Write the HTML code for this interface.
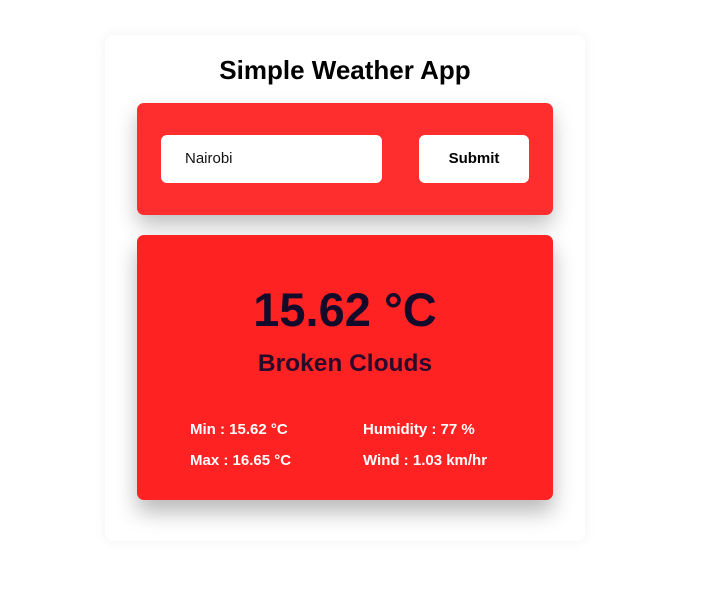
<!DOCTYPE html>
<html><head><style>
body{margin:0;width:708px;height:602px;background:#fff;font-family:"Liberation Sans",sans-serif;position:relative;overflow:hidden}
.card{position:absolute;left:105px;top:35px;width:480px;height:506px;background:#fff;border-radius:8px;box-shadow:0 0 12px rgba(0,0,0,.06)}
h1{position:absolute;left:105px;width:480px;top:55px;margin:0;text-align:center;font-size:26px;font-weight:bold;color:#000}
.form{position:absolute;left:137px;top:103px;width:416px;height:112px;background:#ff2e2e;border-radius:7px;box-shadow:0 10px 20px rgba(0,0,0,.25)}
.inp{position:absolute;left:24px;top:32px;width:221px;height:48px;background:#fff;border-radius:6px;font-size:15px;line-height:48px;text-indent:24px;color:#111}
.btn{position:absolute;left:282px;top:32px;width:110px;height:48px;background:#fff;border-radius:6px;font-size:15px;line-height:48px;text-align:center;font-weight:bold;color:#000}
.w{position:absolute;left:137px;top:235px;width:416px;height:265px;background:#ff2222;border-radius:7px;box-shadow:0 12px 22px rgba(0,0,0,.28)}
.t{position:absolute;width:416px;top:47px;text-align:center;font-size:47px;font-weight:bold;color:#140a2a}
.d{position:absolute;width:416px;top:115px;text-align:center;font-size:24.5px;font-weight:bold;color:#2a0a2a}
.s{position:absolute;color:#fff;font-weight:bold;font-size:15px}
</style></head><body>
<div class="card"></div>
<h1>Simple Weather App</h1>
<div class="form"><div class="inp">Nairobi</div><div class="btn">Submit</div></div>
<div class="w">
<div class="t">15.62 °C</div>
<div class="d">Broken Clouds</div>
<div class="s" style="left:53px;top:186px">Min : 15.62 °C</div>
<div class="s" style="left:226px;top:186px">Humidity : 77 %</div>
<div class="s" style="left:53px;top:217px">Max : 16.65 °C</div>
<div class="s" style="left:226px;top:217px">Wind : 1.03 km/hr</div>
</div>
</body></html>
